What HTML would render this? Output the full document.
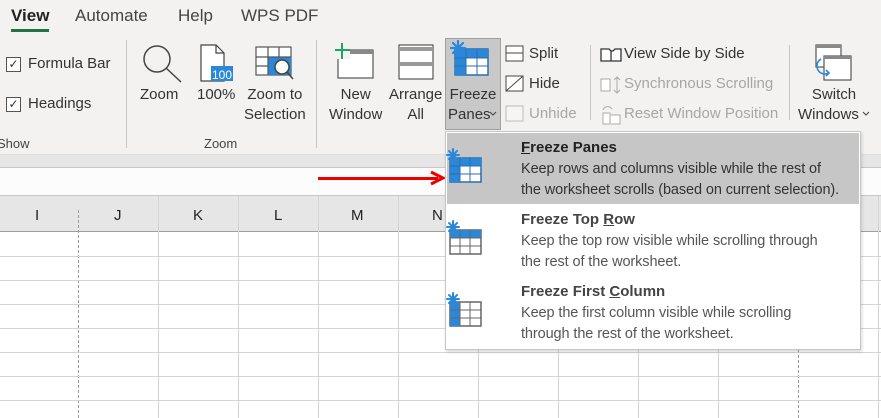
<!DOCTYPE html>
<html><head><meta charset="utf-8"><style>
*{margin:0;padding:0;box-sizing:border-box}
body{width:881px;height:418px;overflow:hidden;position:relative;background:#fff;font-family:"Liberation Sans",sans-serif;color:#333}
.a{position:absolute;white-space:nowrap}
.rib{position:absolute;left:0;top:0;width:881px;height:155px;background:#f3f2f1}
.t{font-size:15px;color:#444}
.tab{font-size:17px;color:#444;top:6px}
.sep{position:absolute;width:1px;background:#c8c6c4}
.lbl{font-size:15px;color:#333;text-align:center;line-height:20px}
.dis{color:#a6a6a6}
.chk{position:absolute;width:15px;height:15px;border:1px solid #555;background:#fff;font-size:12px;line-height:13px;text-align:center}
.col{position:absolute;top:196px;width:1px;height:222px;background:#d4d4d4}
.row{position:absolute;left:0;width:881px;height:1px;background:#d4d4d4}
.hl{font-size:15px;color:#222;top:207px}
.mt{font-size:15px;font-weight:bold;color:#444}
.md{font-size:14.5px;color:#555;line-height:21px;letter-spacing:-0.1px}
</style></head><body>
<div class="rib"></div>
<div class="a tab" style="left:11px;color:#222;font-weight:bold">View</div>
<div class="a" style="left:11px;top:29px;width:38px;height:3px;background:#217346"></div>
<div class="a tab" style="left:75px">Automate</div>
<div class="a tab" style="left:178px">Help</div>
<div class="a tab" style="left:241px">WPS PDF</div>

<div class="chk" style="left:6px;top:57px">✓</div><div class="a t" style="left:28px;top:55px;color:#333">Formula Bar</div>
<div class="chk" style="left:6px;top:97px">✓</div><div class="a t" style="left:28px;top:95px;color:#333">Headings</div>
<div class="a" style="left:-3px;top:136px;font-size:13px;color:#444">Show</div>
<div class="sep" style="left:126px;top:40px;height:108px"></div>
<div class="a" style="left:204px;top:136px;font-size:13px;color:#444">Zoom</div>
<div class="sep" style="left:316px;top:40px;height:108px"></div>

<svg class="a" style="left:140px;top:42px" width="48" height="42"><circle cx="17" cy="17" r="13" fill="none" stroke="#444" stroke-width="1.5"/><line x1="26" y1="26" x2="41" y2="40" stroke="#444" stroke-width="1.5"/></svg>
<div class="a lbl" style="left:140px;top:85px">Zoom</div>
<svg class="a" style="left:198px;top:44px" width="40" height="40"><path d="M3 1H18L26 9V37H3Z" fill="#fff" stroke="#444" stroke-width="1.2"/><path d="M18 1V9H26" fill="none" stroke="#444" stroke-width="1.2"/><rect x="13" y="22" width="22" height="15" fill="#2b88d8"/><text x="24" y="35" font-size="12" fill="#fff" text-anchor="middle" font-family="Liberation Sans">100</text></svg>
<div class="a lbl" style="left:197px;top:85px">100%</div>
<svg class="a" style="left:255px;top:46px" width="42" height="38"><rect x="1" y="1" width="35" height="28" fill="#fff" stroke="#555" stroke-width="1.2"/><rect x="13" y="11" width="23" height="18" fill="#2b88d8"/><path d="M1 11H36M1 20H13M13 1V29M24 1V11" stroke="#555" stroke-width="1.2"/><circle cx="27" cy="21" r="7" fill="#fff" stroke="#444" stroke-width="1.5"/><line x1="32" y1="26" x2="38" y2="33" stroke="#444" stroke-width="1.5"/></svg>
<div class="a lbl" style="left:244px;top:85px">Zoom to<br>Selection</div>

<svg class="a" style="left:334px;top:42px" width="42" height="40"><rect x="4" y="8" width="35" height="28" fill="#fff" stroke="#555" stroke-width="1.2"/><rect x="4" y="8" width="35" height="4" fill="#888"/><rect x="1" y="1" width="15" height="16" fill="#f3f2f1"/><path d="M8 1V17M1 8H16" stroke="#21a366" stroke-width="2"/></svg>
<div class="a lbl" style="left:329px;top:85px">New<br>Window</div>
<svg class="a" style="left:398px;top:44px" width="38" height="36"><rect x="1" y="1" width="34" height="34" fill="#fff" stroke="#555" stroke-width="1.2"/><rect x="1" y="3" width="34" height="4" fill="#999"/><rect x="1" y="18" width="34" height="4" fill="#999"/></svg>
<div class="a lbl" style="left:389px;top:85px">Arrange<br>All</div>

<div class="a" style="left:445px;top:38px;width:56px;height:92px;background:#c8c8c8;border:1px solid #a0a0a0"></div>
<svg class="a" style="left:450px;top:40px" width="44" height="38"><rect x="5" y="9" width="33" height="26" fill="#fff" stroke="#2b6cb0" stroke-width="1.5"/><rect x="5" y="9" width="33" height="9" fill="#2b88d8"/><rect x="5" y="9" width="11" height="26" fill="#2b88d8"/><path d="M5 18H38M5 26H38M16 9V35M27 9V35" stroke="#2b6cb0" stroke-width="1"/><g stroke="#2b88d8" stroke-width="2.2" stroke-linecap="round"><path d="M8 1V15M1 8H15M3 3L13 13M13 3L3 13"/></g></svg>
<div class="a lbl" style="left:445px;top:85px;width:56px">Freeze</div>
<div class="a lbl" style="left:448px;top:105px">Panes</div>
<svg class="a" style="left:489px;top:111px" width="8" height="6"><path d="M1 1L4 4L7 1" stroke="#444" fill="none"/></svg>

<svg class="a" style="left:505px;top:45px" width="20" height="18"><rect x="1" y="1" width="17" height="15" fill="#fff" stroke="#444"/><path d="M1 8H18" stroke="#444"/></svg>
<div class="a t" style="left:529px;top:45px;color:#333">Split</div>
<svg class="a" style="left:505px;top:75px" width="20" height="18"><rect x="1" y="1" width="17" height="15" fill="#fff" stroke="#444"/><path d="M1 16L18 1" stroke="#444"/></svg>
<div class="a t" style="left:529px;top:75px;color:#333">Hide</div>
<svg class="a" style="left:505px;top:105px" width="20" height="18"><rect x="1" y="1" width="17" height="15" fill="#f5f5f5" stroke="#bbb"/></svg>
<div class="a t dis" style="left:529px;top:105px">Unhide</div>
<div class="sep" style="left:590px;top:45px;height:75px"></div>
<svg class="a" style="left:600px;top:47px" width="22" height="16"><path d="M1 2H9L11 4V14H1ZM11 4H13L15 2H21V14H11" fill="#fff" stroke="#333" stroke-width="1.3"/></svg>
<div class="a t" style="left:624px;top:45px;color:#333">View Side by Side</div>
<svg class="a" style="left:600px;top:76px" width="22" height="18"><path d="M1 3H10V15H1Z" fill="#fff" stroke="#aaa"/><path d="M17 1V17M14 4L17 1L20 4M14 14L17 17L20 14" stroke="#aaa" fill="none"/></svg>
<div class="a t dis" style="left:624px;top:75px">Synchronous Scrolling</div>
<svg class="a" style="left:600px;top:105px" width="22" height="20"><path d="M3 8H10V19H3ZM11 10H20V19H11" fill="#fff" stroke="#aaa"/><path d="M3 5A5 5 0 0 1 12 4" stroke="#aaa" fill="none"/></svg>
<div class="a t dis" style="left:624px;top:105px">Reset Window Position</div>
<div class="sep" style="left:789px;top:45px;height:75px"></div>
<svg class="a" style="left:814px;top:43px" width="40" height="40"><rect x="2" y="2" width="25" height="22" fill="#fff" stroke="#555" stroke-width="1.2"/><rect x="2" y="2" width="25" height="3" fill="#888"/><rect x="10" y="13" width="27" height="24" fill="#fff" stroke="#555" stroke-width="1.2"/><rect x="10" y="13" width="27" height="3" fill="#888"/><path d="M7 16A8 8 0 0 0 15 30" stroke="#2b88d8" stroke-width="1.6" fill="none"/><path d="M12 27L15 30L12 33" stroke="#2b88d8" stroke-width="1.6" fill="none"/></svg>
<div class="a lbl" style="left:796px;top:85px;width:76px">Switch</div>
<div class="a lbl" style="left:798px;top:105px">Windows</div>
<svg class="a" style="left:862px;top:111px" width="8" height="6"><path d="M1 1L4 4L7 1" stroke="#444" fill="none"/></svg>

<div class="a" style="left:0;top:154px;width:881px;height:13px;background:#e6e6e6;border-top:1px solid #e0dedc"></div>
<div class="a" style="left:0;top:167px;width:881px;height:29px;background:#fcfcfc;border-top:1px solid #c8c8c8;border-bottom:1px solid #c8c8c8"></div>
<div class="a" style="left:318px;top:177px;width:120px;height:3px;background:#e00"></div>
<svg class="a" style="left:428px;top:170px" width="18" height="16"><path d="M3 2L15 8L3 14" stroke="#e00" stroke-width="3" fill="none"/></svg>

<div class="a" style="left:0;top:196px;width:881px;height:36px;background:#e6e6e6;border-bottom:1px solid #9f9f9f"></div>
<div class="col" style="left:158px"></div><div class="col" style="left:238px"></div><div class="col" style="left:318px"></div><div class="col" style="left:398px"></div><div class="col" style="left:478px"></div><div class="col" style="left:558px"></div><div class="col" style="left:638px"></div><div class="col" style="left:718px"></div><div class="col" style="left:878px"></div>
<div class="a" style="left:78px;top:210px;height:208px;border-left:1px dashed #999"></div>
<div class="a" style="left:798px;top:210px;height:208px;border-left:1px dashed #999"></div>
<div class="row" style="top:256px"></div><div class="row" style="top:280px"></div><div class="row" style="top:304px"></div><div class="row" style="top:328px"></div><div class="row" style="top:352px"></div><div class="row" style="top:376px"></div><div class="row" style="top:400px"></div>
<div class="a hl" style="left:35px">I</div><div class="a hl" style="left:114px">J</div><div class="a hl" style="left:193px">K</div><div class="a hl" style="left:274px">L</div><div class="a hl" style="left:351px">M</div><div class="a hl" style="left:432px">N</div>

<div class="a" style="left:445px;top:131px;width:416px;height:219px;background:#fff;border:1px solid #c6c6c6;box-shadow:1px 2px 3px rgba(0,0,0,.15)"></div>
<div class="a" style="left:447px;top:133px;width:412px;height:71px;background:#c6c6c6"></div>
<svg class="a" style="left:445px;top:147px" width="40" height="38"><rect x="5" y="11" width="31" height="24" fill="#fff" stroke="#2b6cb0" stroke-width="1.5"/><rect x="5" y="11" width="31" height="8" fill="#2b88d8"/><rect x="5" y="11" width="10" height="24" fill="#2b88d8"/><path d="M5 19H36M5 27H36M15 11V35M25 11V35" stroke="#2b6cb0"/><g stroke="#2b88d8" stroke-width="2" stroke-linecap="round"><path d="M8 2V14M2 8H14M4 4L12 12M12 4L4 12"/></g></svg>
<svg class="a" style="left:445px;top:219px" width="40" height="38"><rect x="5" y="11" width="31" height="24" fill="#fff" stroke="#666" stroke-width="1.5"/><rect x="5" y="11" width="31" height="8" fill="#2b88d8"/><path d="M5 19H36M5 27H36M15 11V35M25 11V35" stroke="#666"/><g stroke="#2b88d8" stroke-width="2" stroke-linecap="round"><path d="M8 2V14M2 8H14M4 4L12 12M12 4L4 12"/></g></svg>
<svg class="a" style="left:445px;top:291px" width="40" height="38"><rect x="5" y="11" width="31" height="24" fill="#fff" stroke="#666" stroke-width="1.5"/><rect x="5" y="11" width="10" height="24" fill="#2b88d8"/><path d="M5 19H36M5 27H36M15 11V35M25 11V35" stroke="#666"/><g stroke="#2b88d8" stroke-width="2" stroke-linecap="round"><path d="M8 2V14M2 8H14M4 4L12 12M12 4L4 12"/></g></svg>
<div class="a mt" style="left:521px;top:139px;color:#222"><u>F</u>reeze Panes</div>
<div class="a md" style="left:521px;top:159px;color:#333">Keep rows and columns visible while the rest of<br>the worksheet scrolls (based on current selection).</div>
<div class="a mt" style="left:521px;top:211px">Freeze Top <u>R</u>ow</div>
<div class="a md" style="left:521px;top:231px">Keep the top row visible while scrolling through<br>the rest of the worksheet.</div>
<div class="a mt" style="left:521px;top:283px">Freeze First <u>C</u>olumn</div>
<div class="a md" style="left:521px;top:303px">Keep the first column visible while scrolling<br>through the rest of the worksheet.</div>
</body></html>
